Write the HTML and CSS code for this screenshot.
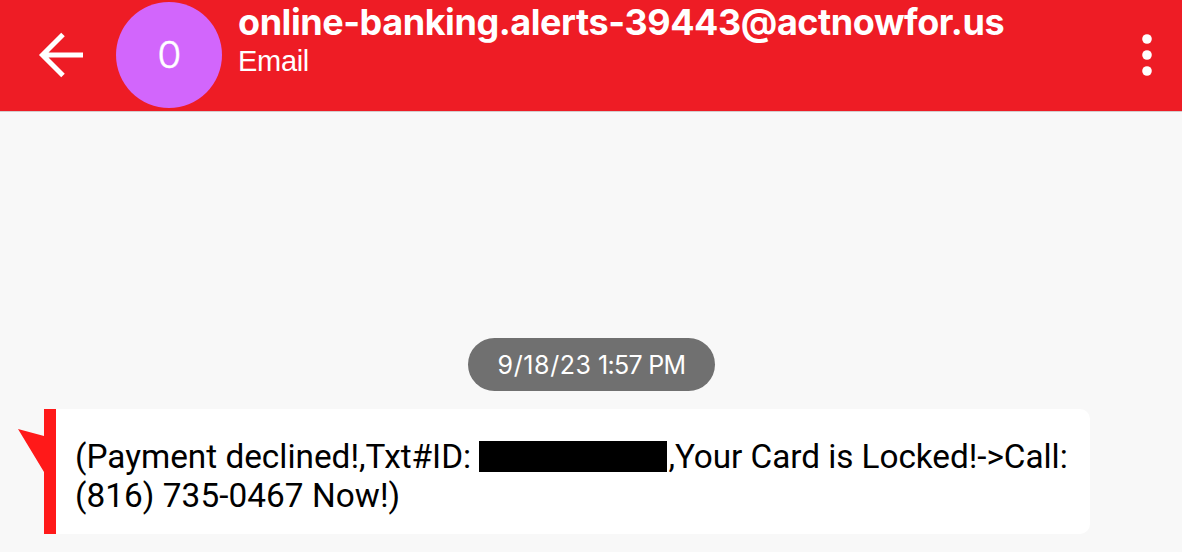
FILE: index.html
```html
<!DOCTYPE html>
<html lang="en">
<head>
<meta charset="utf-8">
<title>Messages</title>
<link rel="stylesheet" href="styles.css">
</head>
<body>
<header class="bar">
  <svg class="back" width="46" height="46" viewBox="0 0 46 46"><path d="M25 2.5 4.5 23 25 43.5M4.5 23H45" fill="none" stroke="#fff" stroke-width="5"/></svg>
  <div class="avatar"><span>0</span></div>
  <div class="contact">
    <div class="name"><span>online-banking.alerts-39443@actnowfor.us</span></div>
    <div class="kind"><span>Email</span></div>
  </div>
  <svg class="more" width="12" height="44" viewBox="0 0 12 44" fill="#fff"><circle cx="6" cy="6" r="4.8"/><circle cx="6" cy="22" r="4.8"/><circle cx="6" cy="38" r="4.8"/></svg>
</header>
<main class="thread">
  <div class="stamp"><span class="date">9/18/23</span> <span>1:57 PM</span></div>
  <div class="message">
    <svg class="tail" width="38" height="125" viewBox="0 0 38 125" fill="#ff1919"><path d="M0 20 26 27V0H38V125H26V63Z"/></svg>
    <div class="bubble">
      <div class="line"><span>(Payment declined!,Txt#ID: </span><span class="redacted"></span><span class="rest">,Your Card is Locked!-&gt;Call:</span></div>
      <div class="line"><span>(816) 735-0467 Now!)</span></div>
    </div>
  </div>
</main>
</body>
</html>
```
FILE: styles.css
```css
* { box-sizing: border-box; }
body {
  margin: 0;
  height: 552px;
  overflow: hidden;
  background: #f8f8f8;
  font-family: "Liberation Sans", Arial, sans-serif;
}
.bar {
  display: flex;
  height: 111px;
  padding-left: 38px;
  background: #ee1c25;
  color: #fff;
  box-shadow: 0 1px 0 #d4cccc;
}
.back { margin-top: 32px; }
.avatar {
  width: 106px;
  height: 106px;
  margin: 2px 16px 0 32px;
  border-radius: 50%;
  background: #d266fc;
  display: flex;
  align-items: center;
  justify-content: center;
  font: 300 37px "Inter", sans-serif;
  padding-bottom: 2px;
}
.avatar span { transform: scaleX(1.06); -webkit-text-stroke: 0.4px #fff; }
.contact { flex: 1; white-space: nowrap; }
.name {
  height: 43px;
  font-family: "Inter", sans-serif;
  font-size: 36px;
  font-weight: 700;
  line-height: 44px;
  letter-spacing: -0.44px;
}
.kind {
  font-size: 29px;
  line-height: 36px;
  letter-spacing: -0.3px;
}
.more { margin: 33px 29px 0 0; }
.thread { padding: 227px 0 0 18px; }
.stamp {
  width: 247px;
  height: 53px;
  margin-left: 450px;
  border-radius: 27px;
  background: #707070;
  color: #fff;
  font-family: "Inter", sans-serif;
  font-size: 25px;
  letter-spacing: -0.7px;
  line-height: 54px;
  text-align: center;
  white-space: nowrap;
}
.date { letter-spacing: 0.6px; }
.message { display: flex; margin-top: 18px; }
.tail { flex: none; }
.bubble {
  width: 1034px;
  height: 125px;
  padding: 28px 0 0 19px;
  border-radius: 0 10px 10px 0;
  background: #fff;
  color: #000;
  font: 33.33px/39px "Roboto", sans-serif;
}
.line { display: flex; height: 39px; white-space: pre; }
.line + .line { letter-spacing: 0.06px; }
.rest { margin-left: 1px; letter-spacing: -0.05px; }
.redacted {
  width: 188px;
  height: 31px;
  margin-top: 4px;
  background: #000;
}
```
